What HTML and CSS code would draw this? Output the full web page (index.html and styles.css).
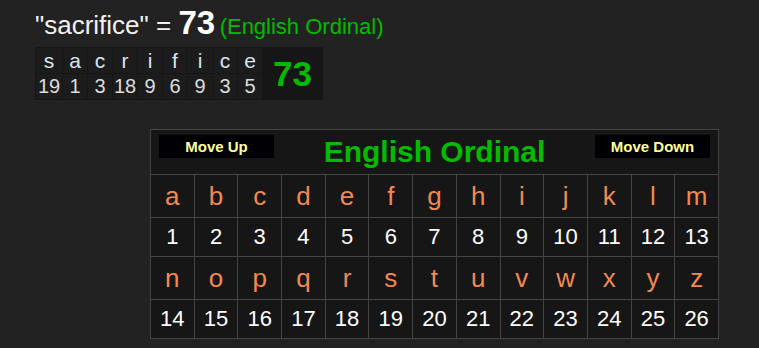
FILE: index.html
```html
<!DOCTYPE html>
<html lang="en">
<head>
<meta charset="utf-8">
<title>sacrifice = 73</title>
<link rel="stylesheet" href="styles.css">
</head>
<body>
  <div class="result">
    <span class="phrase">"sacrifice" = </span><span class="total">73</span> <span class="cipher-name">(English Ordinal)</span>
  </div>

  <table class="breakdown">
    <tr class="letters">
      <td>s</td><td>a</td><td>c</td><td>r</td><td>i</td><td>f</td><td>i</td><td>c</td><td>e</td>
      <td class="sum" rowspan="2">73</td>
    </tr>
    <tr class="values">
      <td>19</td><td>1</td><td>3</td><td>18</td><td>9</td><td>6</td><td>9</td><td>3</td><td>5</td>
    </tr>
  </table>

  <table class="chart">
    <tr>
      <td class="chart-head" colspan="13">
        <div class="head-bar">
          <button class="move">Move Up</button>
          <span class="chart-title">English Ordinal</span>
          <button class="move">Move Down</button>
        </div>
      </td>
    </tr>
    <tr class="letter-row row-a">
      <td>a</td><td>b</td><td>c</td><td>d</td><td>e</td><td>f</td><td>g</td><td>h</td><td>i</td><td>j</td><td>k</td><td>l</td><td>m</td>
    </tr>
    <tr class="number-row">
      <td>1</td><td>2</td><td>3</td><td>4</td><td>5</td><td>6</td><td>7</td><td>8</td><td>9</td><td>10</td><td>11</td><td>12</td><td>13</td>
    </tr>
    <tr class="letter-row">
      <td>n</td><td>o</td><td>p</td><td>q</td><td>r</td><td>s</td><td>t</td><td>u</td><td>v</td><td>w</td><td>x</td><td>y</td><td>z</td>
    </tr>
    <tr class="number-row">
      <td>14</td><td>15</td><td>16</td><td>17</td><td>18</td><td>19</td><td>20</td><td>21</td><td>22</td><td>23</td><td>24</td><td>25</td><td>26</td>
    </tr>
  </table>
</body>
</html>
```

FILE: styles.css
```css
html, body {
  margin: 0;
  padding: 0;
  background: #222222;
  font-family: "Liberation Sans", Arial, sans-serif;
  color: #eeeeee;
}

body {
  width: 759px;
  height: 348px;
  overflow: hidden;
}

/* headline: phrase, total and cipher name */
.result {
  padding: 4px 0 0 35px;
  height: 43px;
  line-height: 38px;
  white-space: nowrap;
}

.phrase {
  font-size: 26px;
  color: #f2f2f2;
}

.total {
  font-size: 33px;
  font-weight: bold;
  color: #ffffff;
}

.cipher-name {
  font-size: 22px;
  color: #00bb00;
}

/* letter-by-letter breakdown */
.breakdown {
  margin-left: 35px;
  border-collapse: separate;
  border-spacing: 1px;
  background: #161616;
}

.breakdown td {
  width: 24px;
  height: 25px;
  padding: 0;
  text-align: center;
  background: #1c1c1c;
  color: #dddddd;
  font-size: 20px;
  line-height: 25px;
}

.breakdown tr td:first-child {
  width: 26px;
}

.breakdown .letters td {
  height: 24px;
  padding-top: 1px;
  color: #d8e6f0;
  font-size: 21px;
  line-height: 24px;
}

.breakdown td.sum {
  width: 59px;
  padding-top: 0;
  background: #161616;
  color: #00bb00;
  font-size: 35px;
  font-weight: bold;
}

/* cipher chart */
.chart {
  margin: 29px 0 0 150px;
  width: 569px;
  table-layout: fixed;
  border-collapse: collapse;
  border: 1px solid #444444;
  background: #161616;
}

.chart td {
  border: 1px solid #444444;
  padding: 0;
  text-align: center;
}

.chart-head {
  height: 44px;
  vertical-align: top;
}

.head-bar {
  display: flex;
  justify-content: space-between;
  align-items: flex-start;
  padding: 5px 8px 0;
}

.move {
  width: 115px;
  height: 23px;
  margin: 0;
  padding: 0;
  border: none;
  background: #000004;
  color: #ffff99;
  font-family: "Liberation Sans", Arial, sans-serif;
  font-size: 15px;
  font-weight: bold;
}

.chart-title {
  color: #00bb00;
  font-size: 30px;
  font-weight: bold;
  line-height: 34px;
  margin-top: 0;
}

.letter-row td {
  height: 42px;
  color: #f08a50;
  font-size: 26px;
}

.number-row td {
  height: 38px;
  color: #ffffff;
  font-size: 22px;
}
```
